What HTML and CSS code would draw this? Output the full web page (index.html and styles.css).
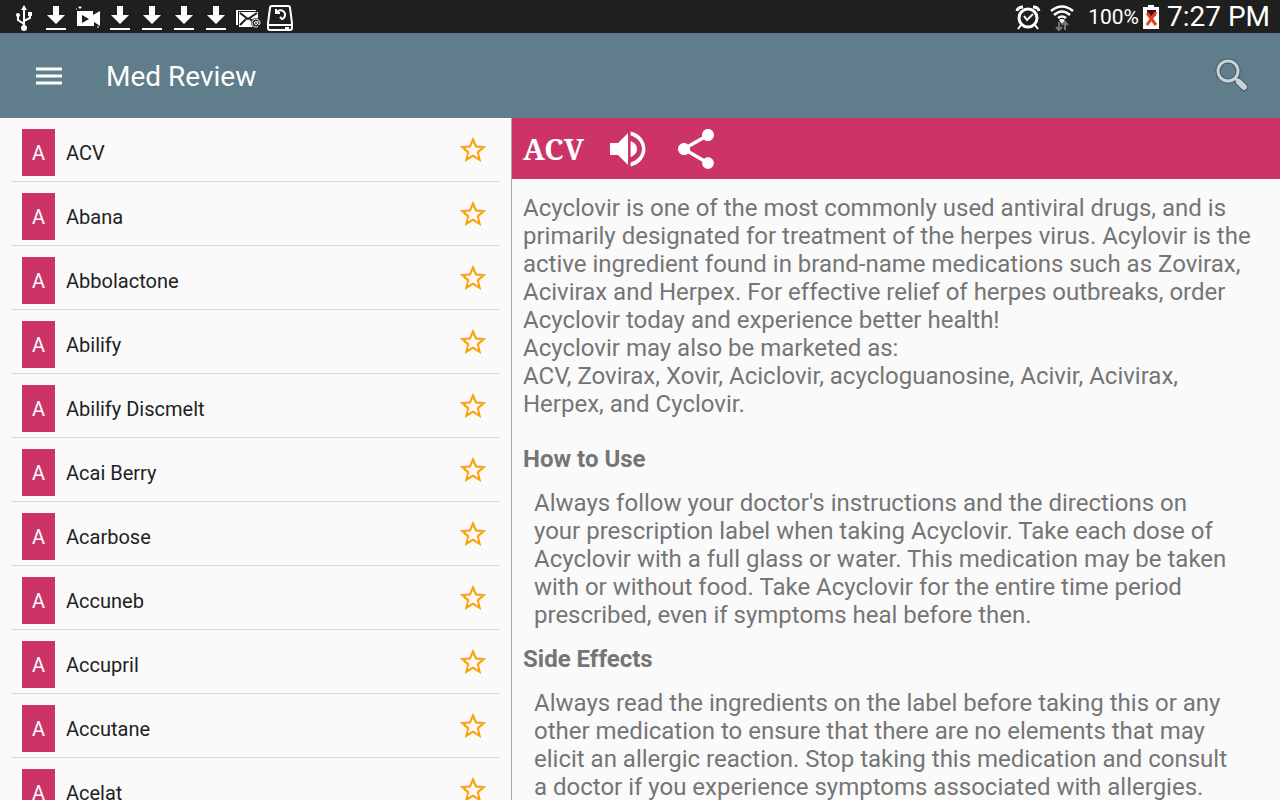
FILE: index.html
```html
<!DOCTYPE html>
<html lang="en">
<head>
  <meta charset="UTF-8" />
  <meta name="viewport" content="width=device-width, initial-scale=1" />
  <title>Med Review</title>
  <link rel="stylesheet" href="styles.css">
</head>
<body>

<svg class="sprite" aria-hidden="true">
  <symbol id="download" viewBox="0 0 24 28">
    <path d="M9 3h6v9h6l-9 9-9-9h6zM2 25h20v2H2z" fill="#fff"/>
  </symbol>
  <symbol id="star" viewBox="0 0 24 24">
    <path d="M22 9.24l-7.19-.62L12 2 9.19 8.63 2 9.24l5.46 4.73L5.82 21 12 17.27 18.18 21l-1.63-7.03L22 9.24zM12 15.4l-3.76 2.27 1-4.28-3.32-2.88 4.38-.38L12 6.1l1.71 4.04 4.38.38-3.32 2.88 1 4.28L12 15.4z" fill="#fca311"/>
  </symbol>
</svg>

<div class="status-bar">
  <div class="notifications">
    <svg width="24" height="28" viewBox="0 0 24 28">
      <path d="M12 5v18M12 21l-6-4v-5M12 18l6-3v-5" fill="none" stroke="#fff" stroke-width="2"/>
      <path d="M12 2l3 5H9zM16 9h4v4h-4z" fill="#fff"/>
      <circle cx="6" cy="12" r="2" fill="#fff"/>
      <circle cx="12" cy="25" r="3" fill="#fff"/>
    </svg>
    <svg width="24" height="28"><use href="#download"/></svg>
    <svg width="24" height="28" viewBox="0 0 24 28">
      <path d="M1 8h16v4l7-4v15l-6-4v4H1z" fill="#fff"/>
      <path d="M6 12l7 4-7 4z" fill="#1f1f1f"/>
      <path d="M4 3v3M2.500 4.500h3M0 6h1M21 24h2" stroke="#fff"/>
    </svg>
    <svg width="24" height="28"><use href="#download"/></svg>
    <svg width="24" height="28"><use href="#download"/></svg>
    <svg width="24" height="28"><use href="#download"/></svg>
    <svg width="24" height="28"><use href="#download"/></svg>
    <svg width="24" height="28" viewBox="0 0 24 28">
      <path d="M0 7h20v1H2v14H0z" fill="#fff"/>
      <path d="M3 9h19v9l-5 6H3z" fill="#fff"/>
      <path d="M4 10l8 6 9-6M4 22l6-6M14 16l3 3" fill="none" stroke="#1f1f1f" stroke-width="2"/>
      <circle cx="20" cy="20" r="5" fill="#1f1f1f"/>
      <path d="M22 23.500a4 4 0 1 1 2-3.500q0 2-1.500 1.500T22 18" fill="none" stroke="#fff"/>
      <circle cx="20" cy="20" r="1.500" fill="none" stroke="#fff"/>
    </svg>
    <svg width="24" height="28" viewBox="0 0 24 28">
      <path d="M4 3h16q2 0 2 2l2 15v5q0 2-2 2H2q-2 0-2-2v-5L2 5q0-2 2-2zM0 22h24" fill="none" stroke="#fff" stroke-width="2"/>
      <path d="M9 9a4.500 4.500 0 1 1 5 7l-2-2M8 6v4h4" fill="none" stroke="#fff" stroke-width="2"/>
      <path d="M17 25h4" stroke="#fff" stroke-width="2"/>
    </svg>
  </div>
  <div class="system">
    <svg width="26" height="28" viewBox="0 0 26 28">
      <circle cx="13" cy="15" r="9" fill="none" stroke="#fff" stroke-width="3"/>
      <path d="M2 8q1-4 6-4M24 8q-1-4-6-4" fill="none" stroke="#fff" stroke-width="3"/>
      <path d="M6 22l-3 4M20 22l3 4M9 13l3 4 6-6" fill="none" stroke="#fff" stroke-width="2"/>
    </svg>
    <svg width="26" height="28" viewBox="0 0 26 28">
      <path d="M2 8q11-9 22 0M5 12q8-7 16 0M9 15q4-3 8 0" fill="none" stroke="#fff" stroke-width="2.500"/>
      <path d="M10 17q3-2 6 0l-3 4z" fill="#fff"/>
      <path d="M10 19v8M7 24l3 3 3-3M16 27v-7M13 22l3-3 3 3" fill="none" stroke="#777" stroke-width="2"/>
    </svg>
    <span class="percent">100%</span>
    <svg width="16" height="24" viewBox="0 0 16 24">
      <path d="M5 0h6v2h5v22H0V2h5z" fill="#fff"/>
      <path d="M4 5h9v5l-4 4-5-4z" fill="#401010"/>
      <path d="M4 8l9 12M13 7L4 20" stroke="#e8401c" stroke-width="3"/>
    </svg>
    <time class="clock">7:27 PM</time>
  </div>
</div>

<header class="app-bar">
  <button class="icon-btn" aria-label="Menu">
    <svg width="26" height="18" viewBox="0 0 26 18">
      <path d="M0 2h26M0 9h26M0 16h26" stroke="#fff" stroke-width="3"/>
    </svg>
  </button>
  <h1>Med Review</h1>
  <button class="icon-btn" aria-label="Search">
    <svg width="34" height="34" viewBox="0 0 34 34">
      <circle cx="13" cy="12" r="10" fill="none" stroke="#45565f" stroke-width="5"/>
      <path d="M20 19l3 3" stroke="#45565f" stroke-width="5"/>
      <path d="M24 23l5 5" stroke="#45565f" stroke-width="8" stroke-linecap="round"/>
      <circle cx="13" cy="12" r="10" fill="none" stroke="#c9d3d6" stroke-width="3"/>
      <path d="M20 19l4 4" stroke="#c9d3d6" stroke-width="3"/>
      <path d="M24 23l5 5" stroke="#c9d3d6" stroke-width="6" stroke-linecap="round"/>
    </svg>
  </button>
</header>

<div class="content">
  <ul class="med-list" id="medList"></ul>

  <main class="detail">
    <div class="detail-head">
      <h2>ACV</h2>
      <button class="icon-btn" aria-label="Listen">
        <svg width="48" height="48" viewBox="0 0 24 24">
          <path d="M3 9v6h4l5 5V4L7 9H3zm13.500 3c0-1.770-1.220-3.290-3.200-4.030v8.050c1.980-.730 3.200-2.250 3.200-4.020zM13.300 3.230v2.060c3.190.860 5.700 3.540 5.700 6.710s-2.510 5.850-5.700 6.710v2.060c4.310-.910 7.400-4.490 7.400-8.770s-3.090-7.860-7.400-8.770z" fill="#fff"/>
        </svg>
      </button>
      <button class="icon-btn" aria-label="Share">
        <svg width="48" height="48" viewBox="0 0 24 24">
          <path d="M18 16.080c-.760 0-1.440.300-1.960.770L8.910 12.700c.050-.230.090-.460.090-.700s-.040-.470-.090-.700l7.050-4.110c.540.500 1.250.810 2.040.810 1.660 0 3-1.340 3-3s-1.340-3-3-3-3 1.340-3 3c0 .240.040.470.090.700L8.040 9.810C7.500 9.310 6.790 9 6 9c-1.660 0-3 1.340-3 3s1.340 3 3 3c.790 0 1.500-.310 2.040-.810l7.120 4.160c-.050.210-.080.430-.080.650 0 1.610 1.310 2.920 2.920 2.920s2.920-1.310 2.920-2.920-1.310-2.920-2.920-2.920z" fill="#fff"/>
        </svg>
      </button>
    </div>
    <article>
      <p>Acyclovir is one of the most commonly used antiviral drugs, and is primarily designated for treatment of the herpes virus. Acylovir is the active ingredient found in brand-name medications such as Zovirax, Acivirax and Herpex. For effective relief of herpes outbreaks, order Acyclovir today and experience better health!<br>
      Acyclovir may also be marketed as:<br>
      ACV, Zovirax, Xovir, Aciclovir, acycloguanosine, Acivir, Acivirax, Herpex, and Cyclovir.</p>
      <h3 class="first">How to Use</h3>
      <p class="indent">Always follow your doctor's instructions and the directions on your prescription label when taking Acyclovir. Take each dose of Acyclovir with a full glass or water. This medication may be taken with or without food. Take Acyclovir for the entire time period prescribed, even if symptoms heal before then.</p>
      <h3>Side Effects</h3>
      <p class="indent">Always read the ingredients on the label before taking this or any other medication to ensure that there are no elements that may elicit an allergic reaction. Stop taking this medication and consult a doctor if you experience symptoms associated with allergies.</p>
    </article>
  </main>
</div>

<script>
  const meds = ['ACV', 'Abana', 'Abbolactone', 'Abilify', 'Abilify Discmelt', 'Acai Berry',
    'Acarbose', 'Accuneb', 'Accupril', 'Accutane', 'Acelat'];

  document.getElementById('medList').innerHTML = meds.map(name => `
    <li>
      <span class="letter">${name[0]}</span>
      <a href="#">${name}</a>
      <button class="icon-btn" aria-label="Favorite ${name}">
        <svg width="32" height="32"><use href="#star"/></svg>
      </button>
    </li>`).join('');
</script>

</body>
</html>
```
FILE: styles.css
```css
* { box-sizing: border-box; }
body { margin: 0; height: 100vh; display: flex; flex-direction: column; overflow: hidden; font-family: Roboto, "Liberation Sans", sans-serif; background: #fafafa; color: #222; }
svg { display: block; flex: none; overflow: visible; }
h1, h2, h3, p, ul { margin: 0; padding: 0; }
.sprite { position: absolute; width: 0; height: 0; }
.icon-btn { border: none; background: none; padding: 0; cursor: pointer; }

.status-bar { flex: none; height: 33px; padding: 0 10px 0 12px; display: flex; justify-content: space-between; align-items: center; background: #1f1f1f; color: #fff; }
.notifications, .system { display: flex; align-items: center; gap: 8px; }
.percent { font-size: 21px; margin-left: 5px; }
.percent + svg { margin-left: -4px; }
.clock { font-size: 28px; }

.app-bar { flex: none; height: 85px; padding: 0 31px 0 36px; display: flex; align-items: center; background: #607d8b; color: #fff; }
.app-bar h1 { flex: 1; margin-left: 44px; padding-top: 2px; font-size: 28px; font-weight: 400; }

.content { flex: 1; min-height: 0; display: grid; grid-template-columns: 2fr 3fr; }
.med-list { list-style: none; padding: 0 11px; overflow: hidden; border-right: 1px solid #aaa; }
.med-list li { height: 64px; padding: 0 11px; display: flex; align-items: center; gap: 11px; border-bottom: 1px solid #d9d9d9; }
.letter { width: 33px; height: 47px; margin-top: 6px; display: flex; align-items: center; justify-content: center; background: #cc3468; color: #fff; font-size: 20px; }
.med-list a { flex: 1; padding-top: 7px; font-size: 20px; color: #222; text-decoration: none; }

.detail { overflow: hidden; }
.detail-head { height: 61px; padding-left: 11px; display: flex; align-items: center; gap: 20px; background: #cc3468; color: #fff; }
.detail-head h2 { font-family: "Noto Serif", "Liberation Serif", serif; font-size: 29px; }
article { padding: 15px 24px 15px 11px; font-size: 24px; line-height: 28px; color: #757575; }
h3 { margin: 16px 0; font-size: 24px; }
h3.first { margin-top: 27px; }
.indent { padding: 0 22px 0 11px; }
```
